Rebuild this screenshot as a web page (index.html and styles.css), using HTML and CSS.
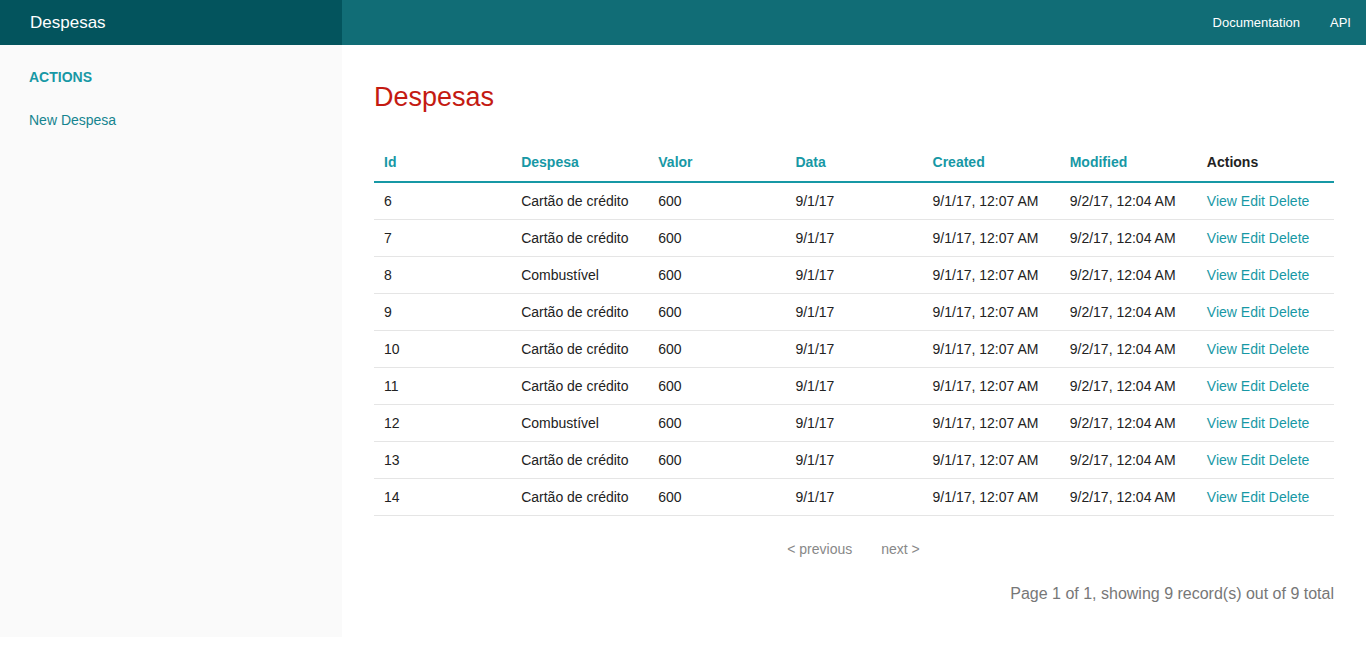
FILE: index.html
```html
<!DOCTYPE html>
<html lang="pt">
<head>
<meta charset="utf-8">
<title>Despesas</title>
<link rel="stylesheet" href="styles.css">
</head>
<body>
<nav class="top-bar">
  <div class="title-area"><a href="#">Despesas</a></div>
  <div class="top-links">
    <a href="#">Documentation</a>
    <a href="#">API</a>
  </div>
</nav>
<div class="page">
  <aside class="side-nav">
    <div class="heading">Actions</div>
    <a class="side-link" href="#">New Despesa</a>
  </aside>
  <main class="content">
    <h3 class="page-title">Despesas</h3>
    <table class="data">
      <thead>
        <tr>
          <th><a href="#">Id</a></th>
          <th><a href="#">Despesa</a></th>
          <th><a href="#">Valor</a></th>
          <th><a href="#">Data</a></th>
          <th><a href="#">Created</a></th>
          <th><a href="#">Modified</a></th>
          <th class="plain">Actions</th>
        </tr>
      </thead>
      <tbody>
        <tr><td>6</td><td>Cartão de crédito</td><td>600</td><td>9/1/17</td><td>9/1/17, 12:07 AM</td><td>9/2/17, 12:04 AM</td><td class="actions"><a href="#">View</a> <a href="#">Edit</a> <a href="#">Delete</a></td></tr>
        <tr><td>7</td><td>Cartão de crédito</td><td>600</td><td>9/1/17</td><td>9/1/17, 12:07 AM</td><td>9/2/17, 12:04 AM</td><td class="actions"><a href="#">View</a> <a href="#">Edit</a> <a href="#">Delete</a></td></tr>
        <tr><td>8</td><td>Combustível</td><td>600</td><td>9/1/17</td><td>9/1/17, 12:07 AM</td><td>9/2/17, 12:04 AM</td><td class="actions"><a href="#">View</a> <a href="#">Edit</a> <a href="#">Delete</a></td></tr>
        <tr><td>9</td><td>Cartão de crédito</td><td>600</td><td>9/1/17</td><td>9/1/17, 12:07 AM</td><td>9/2/17, 12:04 AM</td><td class="actions"><a href="#">View</a> <a href="#">Edit</a> <a href="#">Delete</a></td></tr>
        <tr><td>10</td><td>Cartão de crédito</td><td>600</td><td>9/1/17</td><td>9/1/17, 12:07 AM</td><td>9/2/17, 12:04 AM</td><td class="actions"><a href="#">View</a> <a href="#">Edit</a> <a href="#">Delete</a></td></tr>
        <tr><td>11</td><td>Cartão de crédito</td><td>600</td><td>9/1/17</td><td>9/1/17, 12:07 AM</td><td>9/2/17, 12:04 AM</td><td class="actions"><a href="#">View</a> <a href="#">Edit</a> <a href="#">Delete</a></td></tr>
        <tr><td>12</td><td>Combustível</td><td>600</td><td>9/1/17</td><td>9/1/17, 12:07 AM</td><td>9/2/17, 12:04 AM</td><td class="actions"><a href="#">View</a> <a href="#">Edit</a> <a href="#">Delete</a></td></tr>
        <tr><td>13</td><td>Cartão de crédito</td><td>600</td><td>9/1/17</td><td>9/1/17, 12:07 AM</td><td>9/2/17, 12:04 AM</td><td class="actions"><a href="#">View</a> <a href="#">Edit</a> <a href="#">Delete</a></td></tr>
        <tr><td>14</td><td>Cartão de crédito</td><td>600</td><td>9/1/17</td><td>9/1/17, 12:07 AM</td><td>9/2/17, 12:04 AM</td><td class="actions"><a href="#">View</a> <a href="#">Edit</a> <a href="#">Delete</a></td></tr>
      </tbody>
    </table>
    <div class="paginator">
      <ul class="pagination">
        <li><a href="#">&lt; previous</a></li>
        <li><a href="#">next &gt;</a></li>
      </ul>
      <p class="counter">Page 1 of 1, showing 9 record(s) out of 9 total</p>
    </div>
  </main>
</div>
</body>
</html>
```

FILE: styles.css
```css
* { box-sizing: border-box; }
html, body { margin: 0; padding: 0; }
body {
  font-family: "Liberation Sans", Arial, Helvetica, sans-serif;
  color: #222;
  background: #fff;
  font-size: 14px;
}
a { text-decoration: none; }

.top-bar {
  display: flex;
  height: 45px;
  background: #116d76;
}
.title-area {
  width: 342px;
  background: #03545d;
  display: flex;
  align-items: center;
  padding-left: 30px;
}
.title-area a {
  color: #fff;
  font-size: 17px;
}
.top-links {
  flex: 1;
  display: flex;
  justify-content: flex-end;
  align-items: center;
  gap: 30px;
  padding-right: 15px;
}
.top-links a {
  color: #fff;
  font-size: 13px;
}

.page {
  display: flex;
  align-items: flex-start;
}
.side-nav {
  width: 342px;
  min-height: 592px;
  background: #fafafa;
  padding: 24px 29px;
  display: flex;
  flex-direction: column;
}
.heading {
  color: #1798a5;
  font-weight: bold;
  text-transform: uppercase;
  font-size: 14px;
  line-height: 16px;
}
.side-link {
  margin-top: 27px;
  color: #15848f;
  font-size: 14px;
  line-height: 16px;
}

.content {
  flex: 1;
  padding: 0 32px;
}
.page-title {
  margin: 0;
  padding-top: 36px;
  font-weight: normal;
  font-size: 27px;
  line-height: 32px;
  color: #c41a12;
}
.data {
  width: 100%;
  margin-top: 29px;
  border-collapse: collapse;
  table-layout: fixed;
}
.data th {
  text-align: left;
  font-size: 14px;
  font-weight: bold;
  padding: 10px;
  height: 40px;
  border-bottom: 2px solid #1798a5;
}
.data th a { color: #1798a5; }
.data th.plain { color: #222; }
.data td {
  padding: 0 10px;
  height: 37px;
  border-bottom: 1px solid #e5e5e5;
  font-size: 14px;
  color: #222;
  white-space: nowrap;
}
.data td.actions a { color: #1798a5; }

.paginator { text-align: right; }
.pagination {
  list-style: none;
  margin: 24px 0 0;
  padding: 0 1px 0 0;
  display: flex;
  justify-content: center;
  gap: 29px;
}
.pagination a {
  color: #888;
  font-size: 14px;
  line-height: 18px;
}
.counter {
  margin: 27px 0 0;
  color: #777;
  font-size: 16px;
  line-height: 18px;
}
```
